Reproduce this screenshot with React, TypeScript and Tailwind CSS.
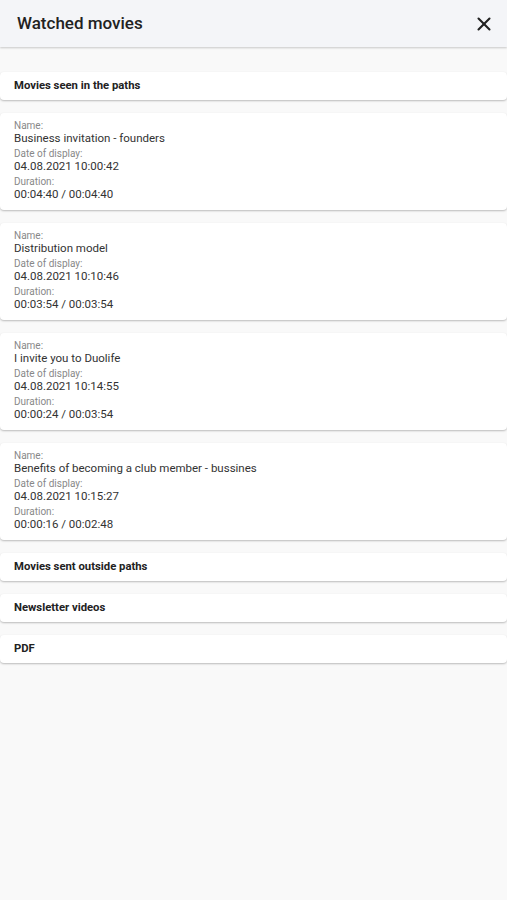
import { X } from 'lucide-react';

type Movie = {
  name: string;
  date: string;
  duration: string;
};

const movies: Movie[] = [
  { name: 'Business invitation - founders', date: '04.08.2021 10:00:42', duration: '00:04:40 / 00:04:40' },
  { name: 'Distribution model', date: '04.08.2021 10:10:46', duration: '00:03:54 / 00:03:54' },
  { name: 'I invite you to Duolife', date: '04.08.2021 10:14:55', duration: '00:00:24 / 00:03:54' },
  { name: 'Benefits of becoming a club member - bussines', date: '04.08.2021 10:15:27', duration: '00:00:16 / 00:02:48' },
];

function SectionHeader({ title }: { title: string }) {
  return (
    <div className="h-[28px] flex items-center px-[14px] bg-white rounded-[4px] shadow-[0_1px_2px_rgba(0,0,0,0.25)] text-[11.3px] font-bold text-[#222]">
      {title}
    </div>
  );
}

function Field({ label, value }: { label: string; value: string }) {
  return (
    <div className="flex flex-col">
      <span className="text-[10px] leading-[12px] text-[#888]">{label}</span>
      <span className="text-[11.5px] leading-[13px] text-[#333]">{value}</span>
    </div>
  );
}

function MovieCard({ movie }: { movie: Movie }) {
  return (
    <div className="bg-white rounded-[4px] shadow-[0_1px_2px_rgba(0,0,0,0.25)] px-[14px] pt-[7px] pb-[9px] flex flex-col gap-[3px]">
      <Field label="Name:" value={movie.name} />
      <Field label="Date of display:" value={movie.date} />
      <Field label="Duration:" value={movie.duration} />
    </div>
  );
}

function App() {
  return (
    <div className="min-h-[900px] bg-[#f9f9f9] font-['Roboto',sans-serif]">
      <div className="h-[47px] bg-[#f4f5f8] flex items-center justify-between pl-[17px] pr-[12px] shadow-[0_1px_2px_rgba(0,0,0,0.2)]">
        <span className="text-[17px] font-medium text-[#222]">Watched movies</span>
        <X className="w-[22px] h-[22px] text-[#222]" strokeWidth={2.3} />
      </div>
      <div className="flex flex-col gap-[13px] pt-[25px]">
        <SectionHeader title="Movies seen in the paths" />
        {movies.map((movie) => (
          <MovieCard key={movie.name} movie={movie} />
        ))}
        <SectionHeader title="Movies sent outside paths" />
        <SectionHeader title="Newsletter videos" />
        <SectionHeader title="PDF" />
      </div>
    </div>
  );
}

export default App;
